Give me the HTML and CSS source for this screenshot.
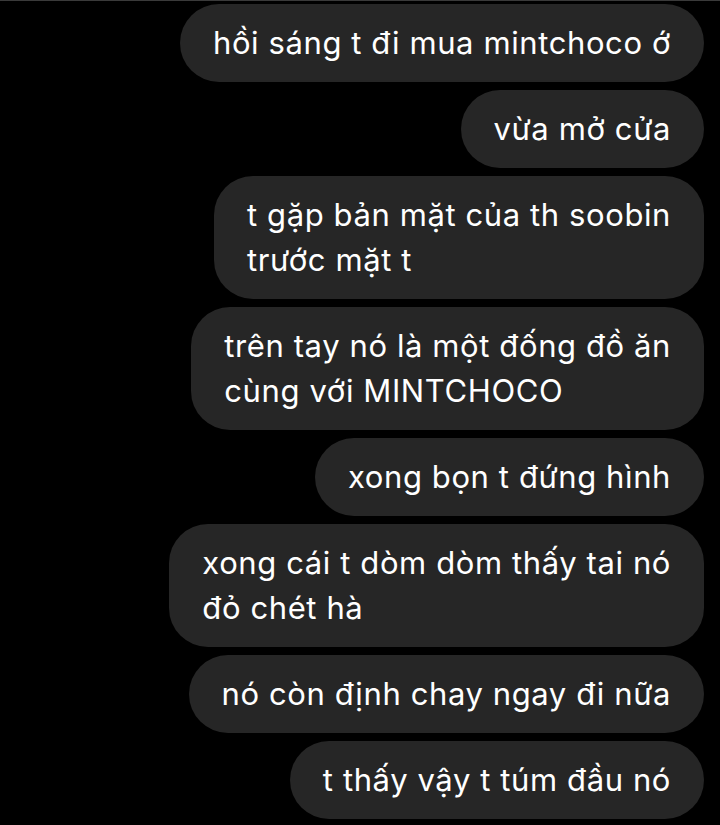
FILE: index.html
```html
<!DOCTYPE html>
<html lang="vi">
<head>
<meta charset="utf-8">
<link rel="stylesheet" href="styles.css">
</head>
<body>
<div class="thread">
  <div class="bubble">hồi sáng t đi mua mintchoco ớ</div>
  <div class="bubble">vừa mở cửa</div>
  <div class="bubble">t gặp bản mặt của th soobin<br>trước mặt t</div>
  <div class="bubble">trên tay nó là một đống đồ ăn<br>cùng với MINTCHOCO</div>
  <div class="bubble">xong bọn t đứng hình</div>
  <div class="bubble">xong cái t dòm dòm thấy tai nó<br>đỏ chét hà</div>
  <div class="bubble">nó còn định chay ngay đi nữa</div>
  <div class="bubble">t thấy vậy t túm đầu nó</div>
</div>
</body>
</html>
```

FILE: styles.css
```css
html, body {
  margin: 0;
  padding: 0;
  background: #000;
}
body {
  border-top: 1px solid #3a3a3a;
  font-family: Inter, "Noto Sans", sans-serif;
}
.thread {
  display: flex;
  flex-direction: column;
  align-items: flex-end;
  gap: 8px;
  padding: 3px 16px 0 0;
}
.bubble {
  background: #262626;
  color: #fff;
  font-size: 31px;
  letter-spacing: 0.6px;
  line-height: 45px;
  padding: 16px 33px 17px;
  border-radius: 39px;
  white-space: nowrap;
}
```
